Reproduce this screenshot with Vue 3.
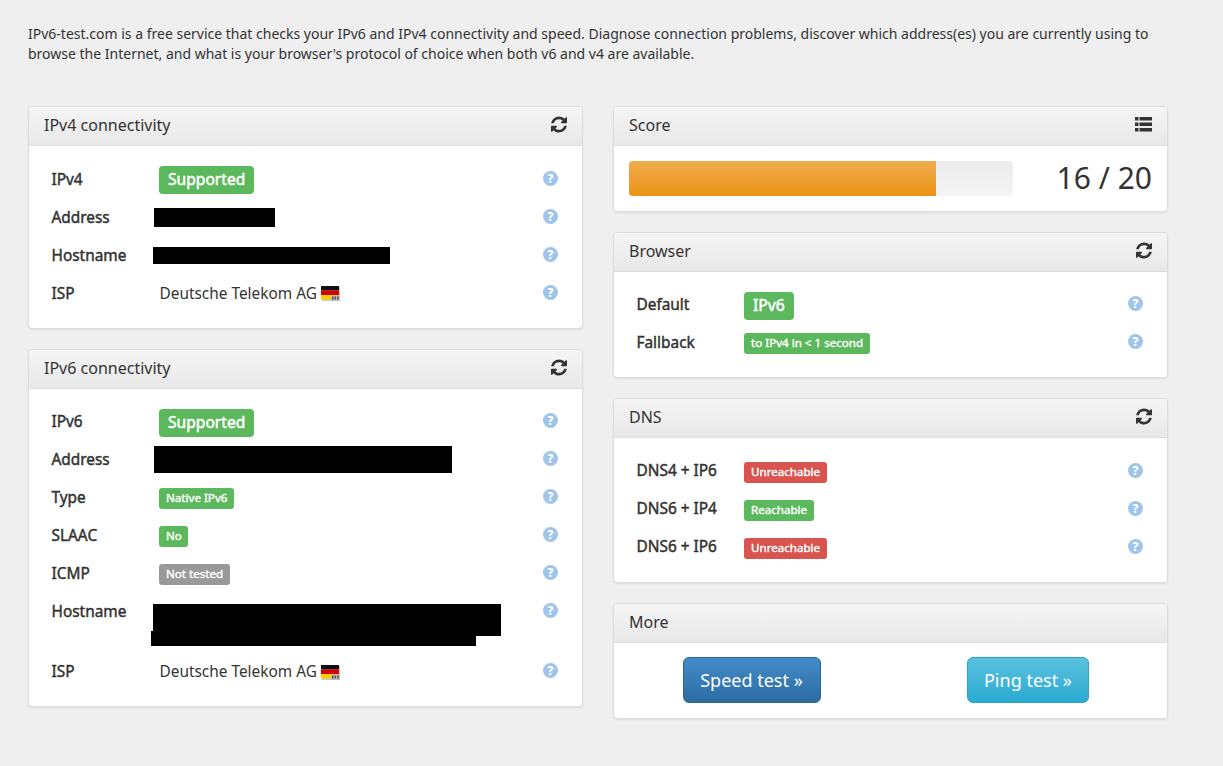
<script setup>
const refreshPath = 'M1639 1056q0 5-1 7-64 268-268 434.5t-478 166.5q-146 0-282.5-55t-243.5-157l-129 129q-19 19-45 19t-45-19-19-45v-448q0-26 19-45t45-19h448q26 0 45 19t19 45-19 45l-137 137q71 66 161 102t187 36q134 0 250-65t186-179q11-17 53-117 8-23 30-23h192q13 0 22.5 9.5t9.5 22.5zm25-800v448q0 26-19 45t-45 19h-448q-26 0-45-19t-19-45 19-45l138-138q-148-137-349-137-134 0-250 65t-186 179q-11 17-53 117-8 23-30 23h-199q-13 0-22.5-9.5t-9.5-22.5v-7q65-268 270-434.5t480-166.5q146 0 284 55.5t245 156.5l130-129q19-19 45-19t45 19 19 45z'

const leftPanels = [
  {
    title: 'IPv4 connectivity',
    rows: [
      { label: 'IPv4', badge: 'Supported', kind: 'green', big: true },
      { label: 'Address', mask: ['m-a4'] },
      { label: 'Hostname', mask: ['m-h4'] },
      { label: 'ISP', isp: true }
    ]
  },
  {
    title: 'IPv6 connectivity',
    rows: [
      { label: 'IPv6', badge: 'Supported', kind: 'green', big: true },
      { label: 'Address', mask: ['m-a6'] },
      { label: 'Type', badge: 'Native IPv6', kind: 'green' },
      { label: 'SLAAC', badge: 'No', kind: 'green' },
      { label: 'ICMP', badge: 'Not tested', kind: 'grey' },
      { label: 'Hostname', mask: ['m-h6a', 'm-h6b'], tall: true },
      { label: 'ISP', isp: true }
    ]
  }
]

const browserRows = [
  { label: 'Default', badge: 'IPv6', kind: 'green', big: true },
  { label: 'Fallback', badge: 'to IPv4 in < 1 second', kind: 'green' }
]

const dnsRows = [
  { label: 'DNS4 + IP6', badge: 'Unreachable', kind: 'red' },
  { label: 'DNS6 + IP4', badge: 'Reachable', kind: 'green' },
  { label: 'DNS6 + IP6', badge: 'Unreachable', kind: 'red' }
]

const rightPanels = [
  { title: 'Browser', rows: browserRows },
  { title: 'DNS', rows: dnsRows }
]
</script>

<template>
  <main class="page">
    <p class="intro">IPv6-test.com is a free service that checks your IPv6 and IPv4 connectivity and speed. Diagnose connection problems, discover which address(es) you are currently using to browse the Internet, and what is your browser's protocol of choice when both v6 and v4 are available.</p>
    <div class="columns">
      <div class="col">
        <section v-for="p in leftPanels" :key="p.title" class="panel">
          <header class="head">
            <span>{{ p.title }}</span>
            <svg class="ico" viewBox="128 128 1536 1536"><path :d="refreshPath" fill="#333" /></svg>
          </header>
          <div class="body">
            <div v-for="r in p.rows" :key="r.label" class="row" :class="{ tall: r.tall }">
              <span class="label">{{ r.label }}</span>
              <div class="value">
                <span v-if="r.badge" class="badge" :class="[r.kind, { big: r.big }]">{{ r.badge }}</span>
                <span v-if="r.mask" class="masks">
                  <i v-for="m in r.mask" :key="m" class="mask" :class="m"></i>
                </span>
                <span v-if="r.isp" class="isp">
                  Deutsche Telekom AG
                  <svg class="flag" viewBox="0 0 19 15">
                    <rect y="1" x="1" width="18" height="14" fill="#ccc" />
                    <rect width="18" height="4.500" fill="#111" />
                    <rect y="4.500" width="18" height="4.500" fill="#d80000" />
                    <rect y="9" width="18" height="4.500" fill="#ffce00" />
                    <rect x="10" y="9.500" width="9" height="5.500" fill="#bdbdbd" />
                    <path d="M11 10.500h1.500v3H11zM13.500 10.500H15v3h-1.500zM16 10.500h1.500v3H16z" fill="#555" />
                  </svg>
                </span>
              </div>
              <span class="help">?</span>
            </div>
          </div>
        </section>
      </div>
      <div class="col">
        <section class="panel">
          <header class="head">
            <span>Score</span>
            <svg class="ico list" viewBox="0 0 17 15">
              <path d="M0 0h3.500v3.500H0zM4.500 0H17v3.500H4.500zM0 5.500h3.500V9H0zM4.500 5.500H17V9H4.500zM0 11h3.500v3.500H0zM4.500 11H17v3.500H4.500z" fill="#333" />
            </svg>
          </header>
          <div class="score">
            <div class="track"><div class="fill" :style="{ width: '80%' }"></div></div>
            <span class="num">16 / 20</span>
          </div>
        </section>
        <section v-for="p in rightPanels" :key="p.title" class="panel">
          <header class="head">
            <span>{{ p.title }}</span>
            <svg class="ico" viewBox="128 128 1536 1536"><path :d="refreshPath" fill="#333" /></svg>
          </header>
          <div class="body">
            <div v-for="r in p.rows" :key="r.label" class="row">
              <span class="label">{{ r.label }}</span>
              <div class="value">
                <span class="badge" :class="[r.kind, { big: r.big }]">{{ r.badge }}</span>
              </div>
              <span class="help">?</span>
            </div>
          </div>
        </section>
        <section class="panel">
          <header class="head"><span>More</span></header>
          <div class="more">
            <a class="btn blue">Speed test »</a>
            <a class="btn cyan">Ping test »</a>
          </div>
        </section>
      </div>
    </div>
  </main>
</template>

<style>
html, body { margin: 0; background: #efefef; }
</style>

<style scoped>
.page {
  box-sizing: border-box;
  width: 1223px;
  height: 766px;
  overflow: hidden;
  padding: 24px 55px 0 28px;
  font-family: "Noto Sans", sans-serif;
  font-size: 14px;
  line-height: 20px;
  color: #333;
}
.intro { margin: 0 0 42px; }
.columns { display: grid; grid-template-columns: 555px 555px; gap: 30px; }
.col { display: flex; flex-direction: column; gap: 20px; }
.panel {
  background: #fff;
  border: 1px solid #ddd;
  border-radius: 4px;
  box-shadow: 0 1px 2px rgba(0, 0, 0, .08);
  overflow: hidden;
}
.head {
  display: flex;
  align-items: center;
  justify-content: space-between;
  height: 39px;
  box-sizing: border-box;
  padding: 0 15px 2px 15px;
  background: linear-gradient(#f5f5f5, #e8e8e8);
  border-bottom: 1px solid #ddd;
  font-size: 16px;
}
.ico { width: 16px; height: 17px; margin-top: -1px; }
.list { width: 17px; height: 15px; }
.body { padding: 14px 24px 15.500px 22.500px; }
.row { display: flex; align-items: center; height: 38px; }
.row.tall { height: 60px; align-items: flex-start; padding-top: 9px; box-sizing: border-box; }
.label {
  width: 107.500px;
  flex: none;
  font-size: 15.400px;
  -webkit-text-stroke: .45px #333;
}
.col:first-child .panel:first-child .label { margin-top: 1px; }
.value { flex: 1; min-width: 0; display: flex; align-items: center; margin-top: 2px; }
.badge {
  display: inline-block;
  color: #fff;
  font-size: 11.600px;
  line-height: 20px;
  padding: 0 6.500px 1px 7px;
  border-radius: 3px;
  -webkit-text-stroke: .4px #fff;
}
.badge.big { font-size: 15.600px; line-height: 26px; padding: 0 9px 2px; border-radius: 4px; -webkit-text-stroke: .5px #fff; }
.green { background: #5cb85c; }
.red { background: #d9534f; }
.grey { background: #999; }
.help {
  flex: none;
  width: 15px;
  height: 15px;
  margin-top: -1.500px;
  border-radius: 50%;
  background: #9fc5e8;
  color: #fff;
  font-size: 12px;
  font-weight: 800;
  line-height: 15px;
  text-align: center;
}
.row.tall .help { margin-top: 1px; }
.masks { display: block; }
.mask { display: block; background: #000; }
.m-a4 { width: 121px; height: 19px; margin-left: -5px; margin-top: -2px; }
.m-h4 { width: 237px; height: 17px; margin-left: -6px; margin-top: -2px; }
.m-a6 { width: 298px; height: 27px; margin-left: -5px; margin-top: -2px; }
.m-h6a { width: 348px; height: 32px; margin-left: -6px; }
.m-h6b { width: 325px; height: 15px; margin-left: -8px; margin-top: -5px; }
.isp { display: inline-flex; align-items: center; font-size: 15.400px; gap: 4px; margin: -1px 0 0 .5px; }
.flag { width: 19px; height: 15px; }
.score { display: flex; align-items: center; justify-content: space-between; padding: 15px 15px 14.600px; }
.track {
  width: 384px;
  height: 35px;
  border-radius: 4px;
  background: linear-gradient(#ebebeb, #f5f5f5);
  overflow: hidden;
}
.fill { height: 100%; background: linear-gradient(#f0ad4e, #eb9316); }
.num { font-size: 30px; line-height: 35px; margin-top: -2px; }
.more { display: grid; grid-template-columns: 1fr 1fr; justify-items: center; padding: 14px 1px 15px 0; }
.btn {
  display: block;
  box-sizing: border-box;
  height: 46px;
  padding: 0 16px;
  border: 1px solid;
  border-radius: 6px;
  color: #fff;
  font-size: 18px;
  line-height: 44px;
}
.blue { background: linear-gradient(#428bca, #2d6ca2); border-color: #2b669a; padding: 0 17px 0 16px; }
.cyan { background: linear-gradient(#5bc0de, #2aabd2); border-color: #28a4c9; }
</style>
